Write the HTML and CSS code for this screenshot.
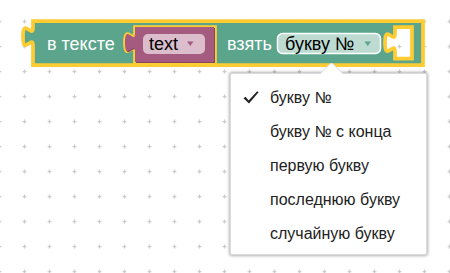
FILE: index.html
```html
<!DOCTYPE html>
<html lang="ru">
<head>
<meta charset="utf-8">
<title>Blockly</title>
<link rel="stylesheet" href="styles.css">
</head>
<body>
<div class="workspace">
  <svg class="canvas" width="450" height="273" viewBox="0 0 450 273">
    <defs>
      <pattern id="grid" patternUnits="userSpaceOnUse" x="12" y="9" width="25" height="25">
        <path class="grid-line" d="M10.6 12.5 H14.4 M12.5 10.6 V14.4"/>
      </pattern>
    </defs>
    <rect class="grid-bg" x="0" y="0" width="450" height="273"/>
    <rect x="0" y="0" width="450" height="273" fill="url(#grid)"/>

    <g class="block">
      <path class="block-main" fill-rule="evenodd"
        d="M33,21 V27.25 c0,12.5 -10,-10.6 -10,9.4 s10,-3.1 10,9.4 V65 H423 V21 Z
           M135,27 V33.25 c0,12.5 -10,-10.6 -10,9.4 s10,-3.1 10,9.4 V63 H215 V27 Z
           M395,27 V33.25 c0,12.5 -10,-10.6 -10,9.4 s10,-3.1 10,9.4 V58.7 H412 V27 Z"/>
      <text class="block-text" x="47" y="50">в тексте</text>

      <g class="var-block">
        <path class="var-dark" transform="translate(1,1)"
          d="M135,27 V33.25 c0,12.5 -10,-10.6 -10,9.4 s10,-3.1 10,9.4 V62 H214 V27 Z"/>
        <path class="var-main"
          d="M135,27 V33.25 c0,12.5 -10,-10.6 -10,9.4 s10,-3.1 10,9.4 V62 H214 V27 Z"/>
        <rect class="var-field" x="143" y="34" width="62" height="20" rx="5"/>
        <text class="field-text" x="149" y="50">text</text>
        <path class="var-arrow" d="M187 41.5 H193.5 L190.25 46 Z"/>
      </g>

      <text class="block-text" x="227" y="50">взять</text>
      <rect class="drop-field" x="277.5" y="33.5" width="103" height="20" rx="5"/>
      <text class="field-text" x="285" y="50">букву №</text>
      <path class="drop-arrow" d="M364.5 41.5 H371 L367.75 46 Z"/>
    </g>
  </svg>

  <div class="dropdown">
    <div class="dropdown-arrow"></div>
    <div class="menu">
      <div class="menu-item">
        <span class="check">
          <svg width="18" height="16" viewBox="0 0 18 16"><path d="M1.5 8.2 L3.6 6.8 L6.6 10.6 L15.2 1.2 L16.6 2.2 L7 13.6 Z"/></svg>
        </span>
        <span class="label">букву №</span>
      </div>
      <div class="menu-item"><span class="check"></span><span class="label">букву № с конца</span></div>
      <div class="menu-item"><span class="check"></span><span class="label">первую букву</span></div>
      <div class="menu-item"><span class="check"></span><span class="label">последнюю букву</span></div>
      <div class="menu-item"><span class="check"></span><span class="label">случайную букву</span></div>
    </div>
  </div>
</div>
</body>
</html>
```

FILE: styles.css
```css
html, body {
  margin: 0;
  padding: 0;
}

body {
  width: 450px;
  height: 273px;
  overflow: hidden;
  background: #fff;
  font-family: "Liberation Sans", Arial, sans-serif;
}

.workspace {
  position: relative;
  width: 450px;
  height: 273px;
}

.canvas {
  display: block;
}

.grid-bg {
  fill: #fff;
}

.grid-line {
  stroke: #ccc;
  stroke-width: 1.25;
  fill: none;
}

.block-main {
  fill: #5ba58c;
  stroke: #fc3;
  stroke-width: 3.75;
}

.block-text {
  font-family: "Liberation Sans", Arial, sans-serif;
  font-size: 18px;
  fill: #fff;
}

.field-text {
  font-family: "Liberation Sans", Arial, sans-serif;
  font-size: 18px;
  fill: #000;
}

.var-dark {
  fill: #844866;
}

.var-main {
  fill: #a55b80;
}

.var-field {
  fill: #dbbdcc;
}

.var-arrow {
  fill: #a55b80;
}

.drop-field {
  fill: #bddbd1;
  stroke: #fff;
  stroke-width: 1.5;
}

.drop-arrow {
  fill: #5ba58c;
}

.dropdown {
  position: absolute;
  left: 230px;
  top: 73px;
  width: 195px;
  background: #fff;
  border: 1px solid #dadce0;
  border-radius: 2px;
  box-shadow: 0 0 3px 1px rgba(0, 0, 0, 0.3);
  padding: 7px 0 3px;
}

.dropdown-arrow {
  position: absolute;
  left: 92px;
  top: -9px;
  width: 16px;
  height: 16px;
  background: #fff;
  border-top: 1px solid #dadce0;
  border-left: 1px solid #dadce0;
  border-top-left-radius: 4px;
  transform: rotate(45deg);
}

.menu {
  position: relative;
  display: flex;
  flex-direction: column;
}

.menu-item {
  display: flex;
  align-items: center;
  height: 34px;
  font-size: 16px;
  color: #222;
}

.check {
  display: flex;
  align-items: center;
  width: 28px;
  margin-left: 11px;
  height: 16px;
}

.check svg {
  display: block;
  fill: #222;
}

.label {
  white-space: nowrap;
}
```
